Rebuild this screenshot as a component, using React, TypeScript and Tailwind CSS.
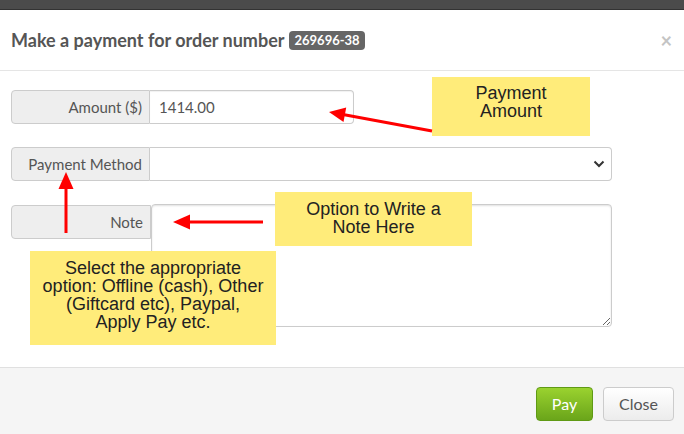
import React from "react";

const ui = { fontFamily: "Lato, 'Open Sans', sans-serif" };
const note = { fontFamily: "'Liberation Sans', Arial, sans-serif" };

export default function App() {
  return (
    <div className="relative w-[684px] h-[434px] overflow-hidden bg-white" style={ui}>
      <div className="h-[10px] bg-[#4b4b4b] border-b border-[#333]" />
      <div className="h-[61px] border-b border-[#e5e5e5] flex items-center justify-between pl-[11px] pr-[12px]">
        <div className="flex items-center gap-[5px] text-[18px] font-bold text-[#555] leading-none">
          <span>Make a payment for order number</span>
          <span className="bg-[#666] text-white text-[13px] font-bold rounded-[4px] px-[5px] py-[3px] leading-[13px]">269696-38</span>
        </div>
        <span className="text-[20px] font-bold text-[#c4c4c4] leading-none">×</span>
      </div>

      <div className="h-[296px] pl-[11px] pr-[72px] pt-[19px] flex flex-col text-[15px] text-[#555]">
        <div className="flex h-[34px] w-[343px]">
          <div className="w-[139px] shrink-0 bg-[#eee] border border-[#ccc] rounded-l-[4px] flex items-center justify-end pr-[7px]">Amount ($)</div>
          <div className="flex-1 border border-l-0 border-[#ccc] rounded-r-[4px] flex items-center pl-[9px] shadow-[inset_0_1px_1px_rgba(0,0,0,0.06)]">1414.00</div>
        </div>
        <div className="flex h-[34px] mt-[23px]">
          <div className="w-[139px] shrink-0 bg-[#eee] border border-[#ccc] rounded-l-[4px] flex items-center justify-end pr-[7px]">Payment Method</div>
          <div className="flex-1 border border-l-0 border-[#ccc] rounded-r-[4px] flex items-center justify-end pr-[6px]">
            <svg width="12" height="8" viewBox="0 0 12 8" fill="none" stroke="#333" strokeWidth="2">
              <path d="M1.5 1.5 L6 6 L10.5 1.5" />
            </svg>
          </div>
        </div>
        <div className="flex mt-[23px]">
          <div className="w-[140px] shrink-0 h-[34px] mt-[1px] bg-[#eee] border border-[#ccc] rounded-l-[4px] flex items-center justify-end pr-[7px]">Note</div>
          <textarea
            className="flex-1 h-[123px] border border-[#ccc] rounded-[4px] shadow-[inset_0_1px_2px_rgba(0,0,0,0.12)] outline-none"
            defaultValue=""
          />
        </div>
      </div>

      <div className="h-[67px] border-t border-[#e0e0e0] bg-[#f5f5f5] flex justify-end items-start pt-[19px] pr-[10px] gap-[10px] text-[16px]">
        <button className="w-[57px] h-[34px] rounded-[4px] border border-[#5f9a14] bg-gradient-to-b from-[#9ad22f] to-[#6aa51a] text-white">Pay</button>
        <button className="w-[71px] h-[34px] rounded-[4px] border border-[#ccc] bg-gradient-to-b from-white to-[#ececec] text-[#555]">Close</button>
      </div>

      <div className="absolute left-[432px] top-[77px] w-[158px] h-[59px] bg-[#ffec7a] text-[#222] text-[18px] leading-[18px] text-center pt-[7px]" style={note}>
        Payment<br />Amount
      </div>
      <div className="absolute left-[275px] top-[192px] w-[197px] h-[54px] bg-[#ffec7a] text-[#222] text-[18px] leading-[18px] text-center pt-[8px]" style={note}>
        Option to Write a<br />Note Here
      </div>
      <div className="absolute left-[30px] top-[251px] w-[246px] h-[94px] bg-[#ffec7a] text-[#222] text-[18px] leading-[18px] text-center pt-[8px]" style={note}>
        Select the appropriate<br />option: Offline (cash), Other<br />(Giftcard etc), Paypal,<br />Apply Pay etc.
      </div>

      <svg className="absolute inset-0 pointer-events-none" width="684" height="434">
        <line x1="432" y1="131" x2="343" y2="114.6" stroke="#ff0000" strokeWidth="3" />
        <polygon points="329,112 343.5,122 346.2,107.5" fill="#ff0000" />
        <line x1="263" y1="222" x2="187" y2="222" stroke="#ff0000" strokeWidth="3" />
        <polygon points="173,222 190,214.5 190,229.5" fill="#ff0000" />
        <line x1="66" y1="233" x2="66" y2="186" stroke="#ff0000" strokeWidth="3" />
        <polygon points="66,172 58.5,189 73.5,189" fill="#ff0000" />
      </svg>
    </div>
  );
}
